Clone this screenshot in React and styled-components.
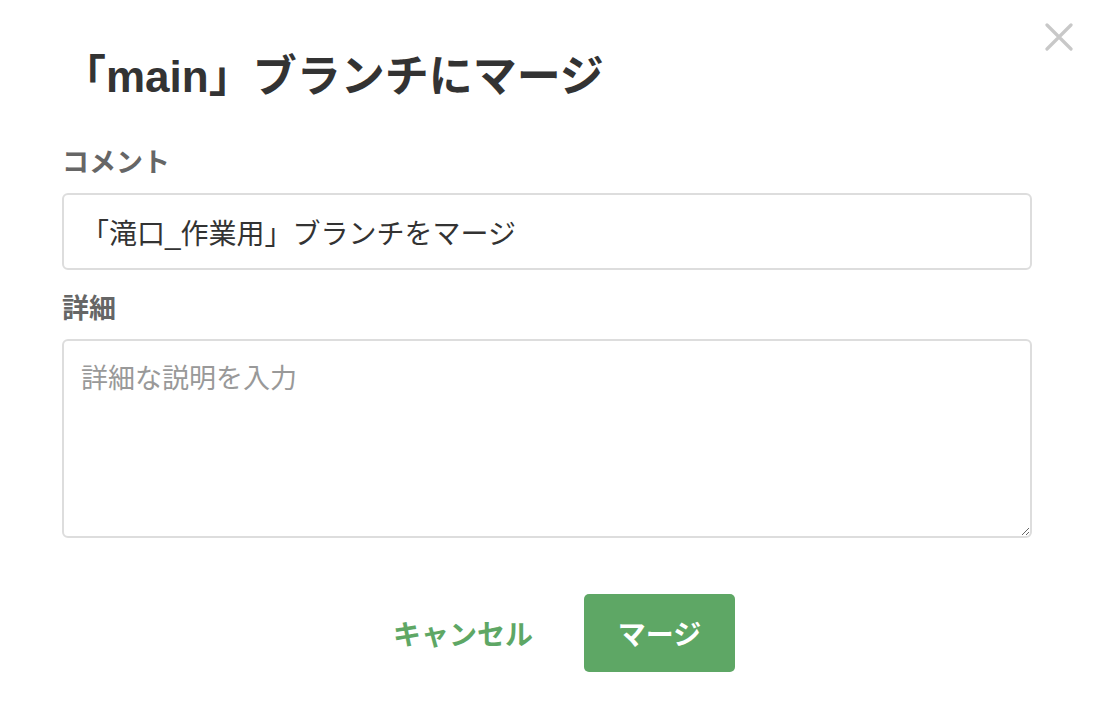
import React, { useState } from 'react';
import styled, { createGlobalStyle } from 'styled-components';

const GlobalStyle = createGlobalStyle`
  html, body {
    margin: 0;
    padding: 0;
    background: #fff;
  }
  body {
    font-family: "Liberation Sans", "Noto Sans CJK JP", sans-serif;
    color: #333;
  }
`;

const Dialog = styled.div`
  position: relative;
  box-sizing: border-box;
  width: 1094px;
  height: 720px;
  padding: 49px 62px 0 62px;
  background: #fff;
`;

const CloseButton = styled.button`
  position: absolute;
  top: 20px;
  right: 18px;
  width: 34px;
  height: 34px;
  padding: 0;
  border: none;
  background: none;
  cursor: pointer;
  display: flex;
  align-items: center;
  justify-content: center;
`;

const Title = styled.h2`
  margin: 0 0 40px 0;
  font-size: 44px;
  line-height: 56px;
  font-weight: bold;
  color: #333;
`;

const Field = styled.div`
  display: flex;
  flex-direction: column;
  margin-bottom: ${p => p.$gap || 0}px;
`;

const Label = styled.label`
  font-size: 27px;
  line-height: 36px;
  font-weight: bold;
  color: #666;
  margin-bottom: 12px;
`;

const TextInput = styled.input`
  box-sizing: border-box;
  width: 100%;
  height: 77px;
  padding: 0 17px;
  border: 2px solid #ddd;
  border-radius: 6px;
  font-family: inherit;
  font-size: 28px;
  color: #333;
  outline: none;
`;

const TextArea = styled.textarea`
  box-sizing: border-box;
  width: 100%;
  height: 199px;
  padding: 20px 17px;
  border: 2px solid #ddd;
  border-radius: 6px;
  font-family: inherit;
  font-size: 27px;
  line-height: 36px;
  color: #333;
  outline: none;
  resize: vertical;

  &::placeholder {
    color: #999;
  }
`;

const Actions = styled.div`
  display: flex;
  justify-content: center;
  align-items: center;
  gap: 51px;
  margin-top: 56px;
  padding-left: 34px;
`;

const CancelButton = styled.button`
  border: none;
  background: none;
  padding: 0;
  font-family: inherit;
  font-size: 28px;
  font-weight: bold;
  color: #5ea765;
  cursor: pointer;
`;

const SubmitButton = styled.button`
  width: 151px;
  height: 78px;
  border: none;
  border-radius: 5px;
  background: #5ea765;
  color: #fff;
  font-family: inherit;
  font-size: 28px;
  font-weight: bold;
  cursor: pointer;
`;

const App = () => {
  const [comment, setComment] = useState('「滝口_作業用」ブランチをマージ');
  const [detail, setDetail] = useState('');

  return (
    <>
      <GlobalStyle />
      <Dialog>
        <CloseButton aria-label="閉じる">
          <svg width="28" height="28" viewBox="0 0 28 28">
            <path d="M2 2L26 26M26 2L2 26" stroke="#c8c8c8" strokeWidth="3.2" strokeLinecap="round" />
          </svg>
        </CloseButton>
        <Title>「main」ブランチにマージ</Title>
        <Field $gap={21}>
          <Label htmlFor="comment">コメント</Label>
          <TextInput id="comment" value={comment} onChange={e => setComment(e.target.value)} />
        </Field>
        <Field>
          <Label htmlFor="detail">詳細</Label>
          <TextArea
            id="detail"
            placeholder="詳細な説明を入力"
            value={detail}
            onChange={e => setDetail(e.target.value)}
          />
        </Field>
        <Actions>
          <CancelButton type="button">キャンセル</CancelButton>
          <SubmitButton type="button">マージ</SubmitButton>
        </Actions>
      </Dialog>
    </>
  );
};

export default App;
